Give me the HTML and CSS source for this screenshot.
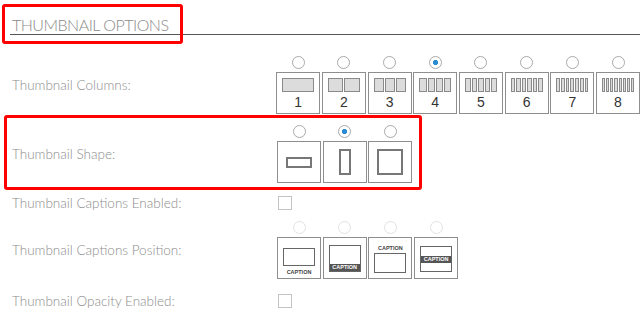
FILE: index.html
```html
<!DOCTYPE html>
<html lang="en">
<head>
  <meta charset="UTF-8" />
  <meta name="viewport" content="width=device-width, initial-scale=1.0"/>
  <title>Thumbnail Options</title>
  <link rel="stylesheet" href="styles.css">
</head>
<body>

  <div class="page">
    <h2 class="section-title">Thumbnail Options</h2>

    <!-- columns -->
    <div class="option-row row-columns">
      <span class="option-label">Thumbnail Columns:</span>
      <div class="choices">
        <label class="choice">
          <input type="radio" name="columns" />
          <span class="choice-box">
            <span class="cols"><i></i></span>
            <span class="choice-num">1</span>
          </span>
        </label>
        <label class="choice">
          <input type="radio" name="columns" />
          <span class="choice-box">
            <span class="cols"><i></i><i></i></span>
            <span class="choice-num">2</span>
          </span>
        </label>
        <label class="choice">
          <input type="radio" name="columns" />
          <span class="choice-box">
            <span class="cols"><i></i><i></i><i></i></span>
            <span class="choice-num">3</span>
          </span>
        </label>
        <label class="choice">
          <input type="radio" name="columns" checked />
          <span class="choice-box">
            <span class="cols"><i></i><i></i><i></i><i></i></span>
            <span class="choice-num">4</span>
          </span>
        </label>
        <label class="choice">
          <input type="radio" name="columns" />
          <span class="choice-box">
            <span class="cols"><i></i><i></i><i></i><i></i><i></i></span>
            <span class="choice-num">5</span>
          </span>
        </label>
        <label class="choice">
          <input type="radio" name="columns" />
          <span class="choice-box">
            <span class="cols"><i></i><i></i><i></i><i></i><i></i><i></i></span>
            <span class="choice-num">6</span>
          </span>
        </label>
        <label class="choice">
          <input type="radio" name="columns" />
          <span class="choice-box">
            <span class="cols"><i></i><i></i><i></i><i></i><i></i><i></i><i></i></span>
            <span class="choice-num">7</span>
          </span>
        </label>
        <label class="choice">
          <input type="radio" name="columns" />
          <span class="choice-box">
            <span class="cols"><i></i><i></i><i></i><i></i><i></i><i></i><i></i><i></i></span>
            <span class="choice-num">8</span>
          </span>
        </label>
      </div>
    </div>

    <!-- shape -->
    <div class="option-row row-shape">
      <span class="option-label">Thumbnail Shape:</span>
      <div class="choices">
        <label class="choice">
          <input type="radio" name="shape" />
          <span class="choice-box centered"><span class="shape shape-landscape"></span></span>
        </label>
        <label class="choice">
          <input type="radio" name="shape" checked />
          <span class="choice-box centered"><span class="shape shape-portrait"></span></span>
        </label>
        <label class="choice">
          <input type="radio" name="shape" />
          <span class="choice-box centered"><span class="shape shape-square"></span></span>
        </label>
      </div>
    </div>

    <div class="option-row row-check">
      <span class="option-label">Thumbnail Captions Enabled:</span>
      <input type="checkbox" class="check" />
    </div>

    <div class="option-row row-caption">
      <span class="option-label">Thumbnail Captions Position:</span>
      <div class="choices">
        <label class="choice">
          <input type="radio" name="caption" disabled />
          <span class="choice-box cap-below">
            <span class="cap-frame"></span>
            <span class="cap-text">CAPTION</span>
          </span>
        </label>
        <label class="choice">
          <input type="radio" name="caption" disabled />
          <span class="choice-box cap-overlay-bottom">
            <span class="cap-frame"><span class="cap-bar">CAPTION</span></span>
          </span>
        </label>
        <label class="choice">
          <input type="radio" name="caption" disabled />
          <span class="choice-box cap-above">
            <span class="cap-text">CAPTION</span>
            <span class="cap-frame"></span>
          </span>
        </label>
        <label class="choice">
          <input type="radio" name="caption" disabled />
          <span class="choice-box cap-overlay-middle">
            <span class="cap-frame"><span class="cap-bar">CAPTION</span></span>
          </span>
        </label>
      </div>
    </div>

    <div class="option-row row-check row-last">
      <span class="option-label">Thumbnail Opacity Enabled:</span>
      <input type="checkbox" class="check" />
    </div>

    <!-- highlight marks -->
    <div class="mark mark-title"></div>
    <div class="mark mark-shape"></div>
  </div>

</body>
</html>
```

FILE: styles.css
```css
body {
  margin: 0;
  font-family: 'Lato', 'Open Sans', sans-serif;
  background: #fff;
  color: #8c8c8c;
  overflow: hidden;
}

.page {
  position: relative;
  padding-left: 10px;
}

.section-title {
  margin: 0;
  padding: 14px 2px 0;
  height: 20px;
  line-height: 21px;
  font-size: 16px;
  font-weight: 300;
  letter-spacing: -0.5px;
  text-transform: uppercase;
  color: #8a8a8a;
  border-bottom: 1px solid #555;
}

.option-row {
  display: flex;
  align-items: center;
}

.option-label {
  width: 265px;
  padding-left: 2px;
  font-size: 13.5px;
  font-weight: 300;
  line-height: 14px;
  color: #8c8c8c;
}

.row-columns { padding-top: 21px; }
.row-shape { padding-top: 11px; }
.row-check { padding-top: 13px; }
.row-caption { padding-top: 11px; }
.row-last { padding-top: 15px; }

.choices {
  display: flex;
  gap: 1.7px;
}

.choice {
  display: flex;
  flex-direction: column;
  align-items: center;
  gap: 3px;
  cursor: pointer;
}

.choice input {
  appearance: none;
  margin: 0;
  width: 13px;
  height: 13px;
  border: 1px solid #a9a9a9;
  border-radius: 50%;
  background: #fff;
}

.choice input:checked {
  background: radial-gradient(circle, #2b8ad4 0 2.4px, #fff 2.9px);
}

.choice input:disabled {
  border-color: #e2e2e2;
}

.choice-box {
  box-sizing: border-box;
  width: 44px;
  height: 42px;
  border: 1px solid #8e8e8e;
  display: flex;
  flex-direction: column;
  align-items: center;
  padding-top: 5px;
}

.choice-box.centered {
  justify-content: center;
  padding-top: 0;
}

.cols {
  display: flex;
  gap: 1px;
  width: 32px;
  height: 14px;
}

.cols i {
  flex: 1;
  border: 1px solid #8a8a8a;
  background: #dcdcdc;
}

.choice-num {
  margin-top: 2px;
  font-family: 'Liberation Sans', Arial, sans-serif;
  font-size: 14px;
  line-height: 16px;
  color: #333;
}

.shape {
  box-sizing: border-box;
  border: 2px solid #777;
}

.shape-landscape { width: 26px; height: 11px; }
.shape-portrait { width: 12px; height: 26px; }
.shape-square { width: 26px; height: 26px; }

/* caption previews */
.cap-frame {
  box-sizing: border-box;
  width: 32px;
  border: 1px solid #666;
}

.cap-text {
  font-family: 'Liberation Sans', Arial, sans-serif;
  font-size: 5.5px;
  font-weight: bold;
  line-height: 7px;
  color: #444;
}

.cap-below { padding-top: 10px; }
.cap-below .cap-frame { height: 18px; }
.cap-below .cap-text { margin-top: 3px; }

.cap-overlay-bottom { padding-top: 7px; }
.cap-overlay-bottom .cap-frame {
  height: 27px;
  display: flex;
  align-items: flex-end;
}

.cap-above { padding-top: 7px; }
.cap-above .cap-text { margin-bottom: 1px; }
.cap-above .cap-frame { height: 20px; }

.cap-overlay-middle { padding-top: 8px; }
.cap-overlay-middle .cap-frame {
  height: 26px;
  display: flex;
  align-items: center;
}

.cap-bar {
  width: 100%;
  height: 7px;
  background: #555;
  color: #fff;
  font-family: 'Liberation Sans', Arial, sans-serif;
  font-size: 5.5px;
  font-weight: bold;
  line-height: 7px;
  text-align: center;
}

.check {
  appearance: none;
  margin: 0 0 0 1px;
  width: 14px;
  height: 14px;
  border: 1px solid #c4c4c4;
  background: #fff;
}

.mark {
  position: absolute;
  border: 3px solid #f00;
  border-radius: 3px;
  box-sizing: border-box;
  pointer-events: none;
}

.mark-title {
  left: 2px;
  top: 4px;
  width: 181px;
  height: 40px;
}

.mark-shape {
  left: 4px;
  top: 115px;
  width: 418px;
  height: 75px;
}
```
